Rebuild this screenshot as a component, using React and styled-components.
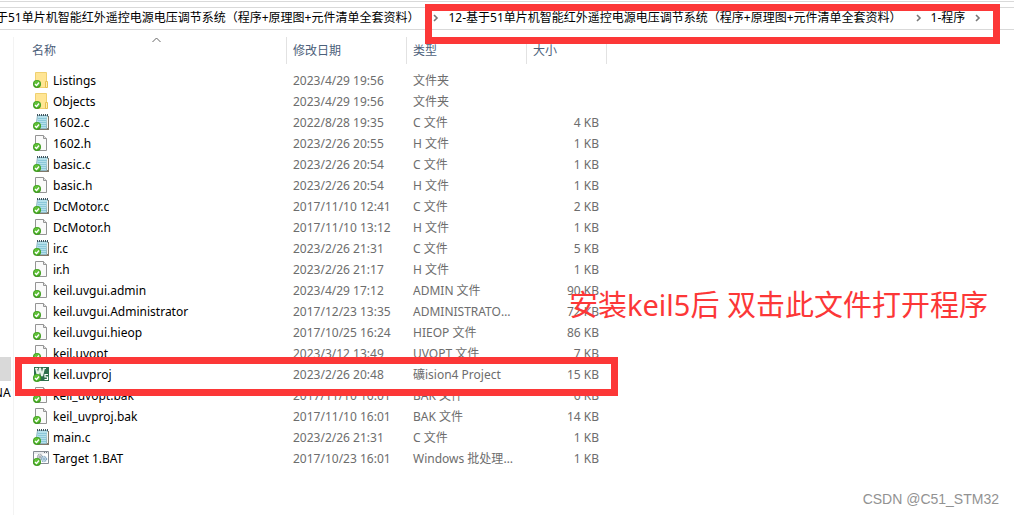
import React from 'react'
import styled, { createGlobalStyle } from 'styled-components'

const GlobalStyle = createGlobalStyle`
* {
  box-sizing: border-box;
}

body {
  margin: 0;
  background: #fff;
  overflow: hidden;
  font-family: 'Noto Sans', 'Noto Sans CJK SC', sans-serif;
  font-size: 12px;
}
`

const Window = styled.div`
position: relative;
display: flex;
flex-direction: column;
min-height: 100vh;
overflow: hidden;
`

const AddressBar = styled.nav`
position: relative;
display: flex;
margin-top: 1px;
padding-top: 5px;
border-top: 1px solid #d9d9d9;
`

const Crumbs = styled.ol`
flex: 1;
display: flex;
align-items: center;
height: 23px;
margin: 0;
padding: 0 0 3px;
list-style: none;
white-space: nowrap;
border: solid #d9d9d9;
border-width: 1px 0;
`

const Crumb = styled.li`
display: flex;
align-items: center;
margin-left: ${(props) => (props.$first ? '-4px' : '0')};
height: 18px;

a {
  color: #000;
  text-decoration: none;
}

svg {
  margin: 2px 9px 0 ${(props) => (props.$last ? '10px' : '14px')};
}
`

const Marker = styled.div`
position: absolute;
z-index: 2;
border: 7px solid #fc3737;
pointer-events: none;
`

const PathMarker = styled(Marker)`
top: 2px;
left: 425px;
width: 575px;
height: 40px;
`

const RowMarker = styled(Marker)`
top: -7px;
left: -17px;
width: 603px;
height: 39px;
`

const Body = styled.main`
flex: 1;
display: flex;
padding-top: 7px;
`

const Tree = styled.aside`
width: 14px;
flex: none;
padding-top: 320px;
overflow: hidden;
border-right: 1px solid #f3f3f3;
`

const TreeSelection = styled.div`
width: 11px;
height: 24px;
background: #d9d9d9;
`

const TreeLabel = styled.div`
display: flex;
justify-content: center;
width: 11px;
height: 24px;
line-height: 24px;
overflow: hidden;
`

const FileTable = styled.table`
table-layout: fixed;
width: 575px;
height: max-content;
margin-left: 18px;
border-collapse: separate;
border-spacing: 0;
`

const HeadCell = styled.th`
position: relative;
height: 27px;
padding: 0 0 0 ${(props) => (props.$first ? '0' : '6px')};
color: #4c607a;
font-weight: 400;
text-align: left;
line-height: 26px;
border-right: 1px solid #e2e2e2;

svg {
  position: absolute;
  top: 0;
  left: 120px;
}
`

const Row = styled.tr`
position: relative;

td {
  height: 21px;
  padding: 0 0 0 6px;
  color: #6d6d6d;
  line-height: 21px;
  white-space: nowrap;
}

tbody &:first-child td {
  height: 27px;
  padding-top: 6px;
}
`

const NameCell = styled.td`
&& {
  padding-left: 0;
  color: #000;
}
`

const FileName = styled.span`
display: flex;
align-items: center;
gap: 3px;
height: 21px;
padding-left: 1px;
`

const TypeCell = styled.td`
overflow: hidden;
text-overflow: ellipsis;

&& {
  padding-right: 10px;
}
`

const SizeCell = styled.td`
text-align: right;

&& {
  padding-right: 8px;
}
`

const Note = styled.p`
position: absolute;
top: 284px;
left: 569px;
z-index: 3;
margin: 0;
color: #fc3737;
font-size: 29px;
line-height: 42px;
white-space: nowrap;
`

const Watermark = styled.footer`
position: absolute;
right: 15px;
bottom: 6px;
color: #929292;
font-family: 'Liberation Sans', sans-serif;
font-size: 14px;
line-height: 20px;
`

const files = [
  ['Listings', '2023/4/29 19:56', '文件夹', '', 'folder'],
  ['Objects', '2023/4/29 19:56', '文件夹', '', 'folder'],
  ['1602.c', '2022/8/28 19:35', 'C 文件', '4 KB', 'note'],
  ['1602.h', '2023/2/26 20:55', 'H 文件', '1 KB', 'page'],
  ['basic.c', '2023/2/26 20:54', 'C 文件', '1 KB', 'note'],
  ['basic.h', '2023/2/26 20:54', 'H 文件', '1 KB', 'page'],
  ['DcMotor.c', '2017/11/10 12:41', 'C 文件', '2 KB', 'note'],
  ['DcMotor.h', '2017/11/10 13:12', 'H 文件', '1 KB', 'page'],
  ['ir.c', '2023/2/26 21:31', 'C 文件', '5 KB', 'note'],
  ['ir.h', '2023/2/26 21:17', 'H 文件', '1 KB', 'page'],
  ['keil.uvgui.admin', '2023/4/29 17:12', 'ADMIN 文件', '90 KB', 'page'],
  ['keil.uvgui.Administrator', '2017/12/23 13:35', 'ADMINISTRATOR 文件', '72 KB', 'page'],
  ['keil.uvgui.hieop', '2017/10/25 16:24', 'HIEOP 文件', '86 KB', 'page'],
  ['keil.uvopt', '2023/3/12 13:49', 'UVOPT 文件', '7 KB', 'page'],
  ['keil.uvproj', '2023/2/26 20:48', '礦ision4 Project', '15 KB', 'keil'],
  ['keil_uvopt.bak', '2017/11/10 16:01', 'BAK 文件', '6 KB', 'page'],
  ['keil_uvproj.bak', '2017/11/10 16:01', 'BAK 文件', '14 KB', 'page'],
  ['main.c', '2023/2/26 21:31', 'C 文件', '1 KB', 'note'],
  ['Target 1.BAT', '2017/10/23 16:01', 'Windows 批处理文件', '1 KB', 'bat'],
]

const shapes = {
  folder: (
    <>
      <path d="M2.500 0.500h11v15h-11z" fill="#ffe594" stroke="#efd070" />
      <path d="M12.500 9.500h2v6h-2z" fill="#ffedb3" stroke="#e6c04f" />
    </>
  ),
  note: (
    <>
      <path d="M5 2h11v14H4z" fill="#81796a" />
      <path d="M4.500 1.500h10l-1 13H2.500z" fill="#b5e0eb" stroke="#8fb6c2" />
      <path d="M5 4.500h9M5 6.500h8M4 8.500h9M4 10.500h9M4 12.500h9" stroke="#8bc8d9" />
      <path d="M14.500 3v11" stroke="#f4f4ee" />
      <path d="M4 1h12" stroke="#3f545d" strokeWidth="2" strokeDasharray="1 1" />
    </>
  ),
  page: (
    <>
      <path d="M2.500 0.500h8l3 3v12h-11z" fill="#fafafa" stroke="#949494" />
      <path d="M10.500 0.500v3h3" fill="#e4e4e4" stroke="#949494" />
    </>
  ),
  keil: (
    <>
      <path d="M1 1h15v14H1z" fill="#2c6e4c" />
      <path d="M3 2l2 8 2-8 2 8 2-8" fill="none" stroke="#e9f3ec" strokeWidth="2" />
      <path d="M2 2.500h3M6 2.500h2M10 2.500h3" stroke="#e9f3ec" />
      <path d="M15 8.500h-3v2.500h2.500v2.500h-3" fill="none" stroke="#fff" strokeWidth="1.200" />
    </>
  ),
  bat: (
    <>
      <path d="M0.500 1.500h15v12H0.500z" fill="#fff" stroke="#858b93" />
      <path d="M1 3h14" stroke="#d5d9de" />
      <path d="M11 2.500h1M13 2.500h1" stroke="#6f767d" />
      <circle cx="7" cy="7" r="2.500" fill="#eee" stroke="#929ba5" strokeWidth="1.400" strokeDasharray="1 0.600" />
      <circle cx="11" cy="9" r="2.500" fill="#e3eff6" stroke="#7da3c0" strokeWidth="1.400" strokeDasharray="1 0.600" />
      <circle cx="7" cy="7" r="1" fill="#fff" stroke="#929ba5" />
      <circle cx="11" cy="9" r="1" fill="#fff" stroke="#7da3c0" />
    </>
  ),
}

const FileIcon = ({ kind }) => (
  <svg width="17" height="17" viewBox="0 0 17 17" aria-hidden="true">
    {shapes[kind]}
    <circle cx="4" cy="12" r="4" fill="#3f9d1f" />
    <circle cx="4" cy="11.500" r="3" fill="#5fc037" />
    <path d="M2 12l1.500 1.500L6 10.500" fill="none" stroke="#fff" strokeWidth="1.300" />
  </svg>
)

const Chevron = () => (
  <svg width="6" height="8" viewBox="0 0 6 8" aria-hidden="true">
    <path d="M1 1l3 3-3 3" fill="none" stroke="#777" strokeWidth="1.600" />
  </svg>
)

const App = () => (
  <Window>
    <GlobalStyle />
    <AddressBar>
      <Crumbs>
        <Crumb $first>
          <a href="#parent">于51单片机智能红外遥控电源电压调节系统（程序+原理图+元件清单全套资料）</a>
          <Chevron />
        </Crumb>
        <Crumb>
          <a href="#project">12-基于51单片机智能红外遥控电源电压调节系统（程序+原理图+元件清单全套资料）</a>
          <Chevron />
        </Crumb>
        <Crumb $last>
          <a href="#program">1-程序</a>
          <Chevron />
        </Crumb>
      </Crumbs>
      <PathMarker />
    </AddressBar>
    <Body>
      <Tree>
        <TreeSelection />
        <TreeLabel>NAS</TreeLabel>
      </Tree>
      <FileTable>
        <colgroup>
          <col style={{ width: 255 }} />
          <col style={{ width: 120 }} />
          <col style={{ width: 120 }} />
          <col style={{ width: 80 }} />
        </colgroup>
        <thead>
          <tr>
            <HeadCell $first>
              名称
              <svg width="9" height="6" viewBox="0 0 9 6" aria-hidden="true">
                <path d="M0.500 5l4-4 4 4" fill="none" stroke="#666" />
              </svg>
            </HeadCell>
            <HeadCell>修改日期</HeadCell>
            <HeadCell>类型</HeadCell>
            <HeadCell>大小</HeadCell>
          </tr>
        </thead>
        <tbody>
          {files.map(([name, date, type, size, kind]) => (
            <Row key={name}>
              <NameCell>
                <FileName>
                  <FileIcon kind={kind} />
                  {name}
                </FileName>
                {kind === 'keil' && <RowMarker />}
              </NameCell>
              <td>{date}</td>
              <TypeCell>{type}</TypeCell>
              <SizeCell>{size}</SizeCell>
            </Row>
          ))}
        </tbody>
      </FileTable>
    </Body>
    <Note>安装keil5后 双击此文件打开程序</Note>
    <Watermark>CSDN @C51_STM32</Watermark>
  </Window>
)

export default App
